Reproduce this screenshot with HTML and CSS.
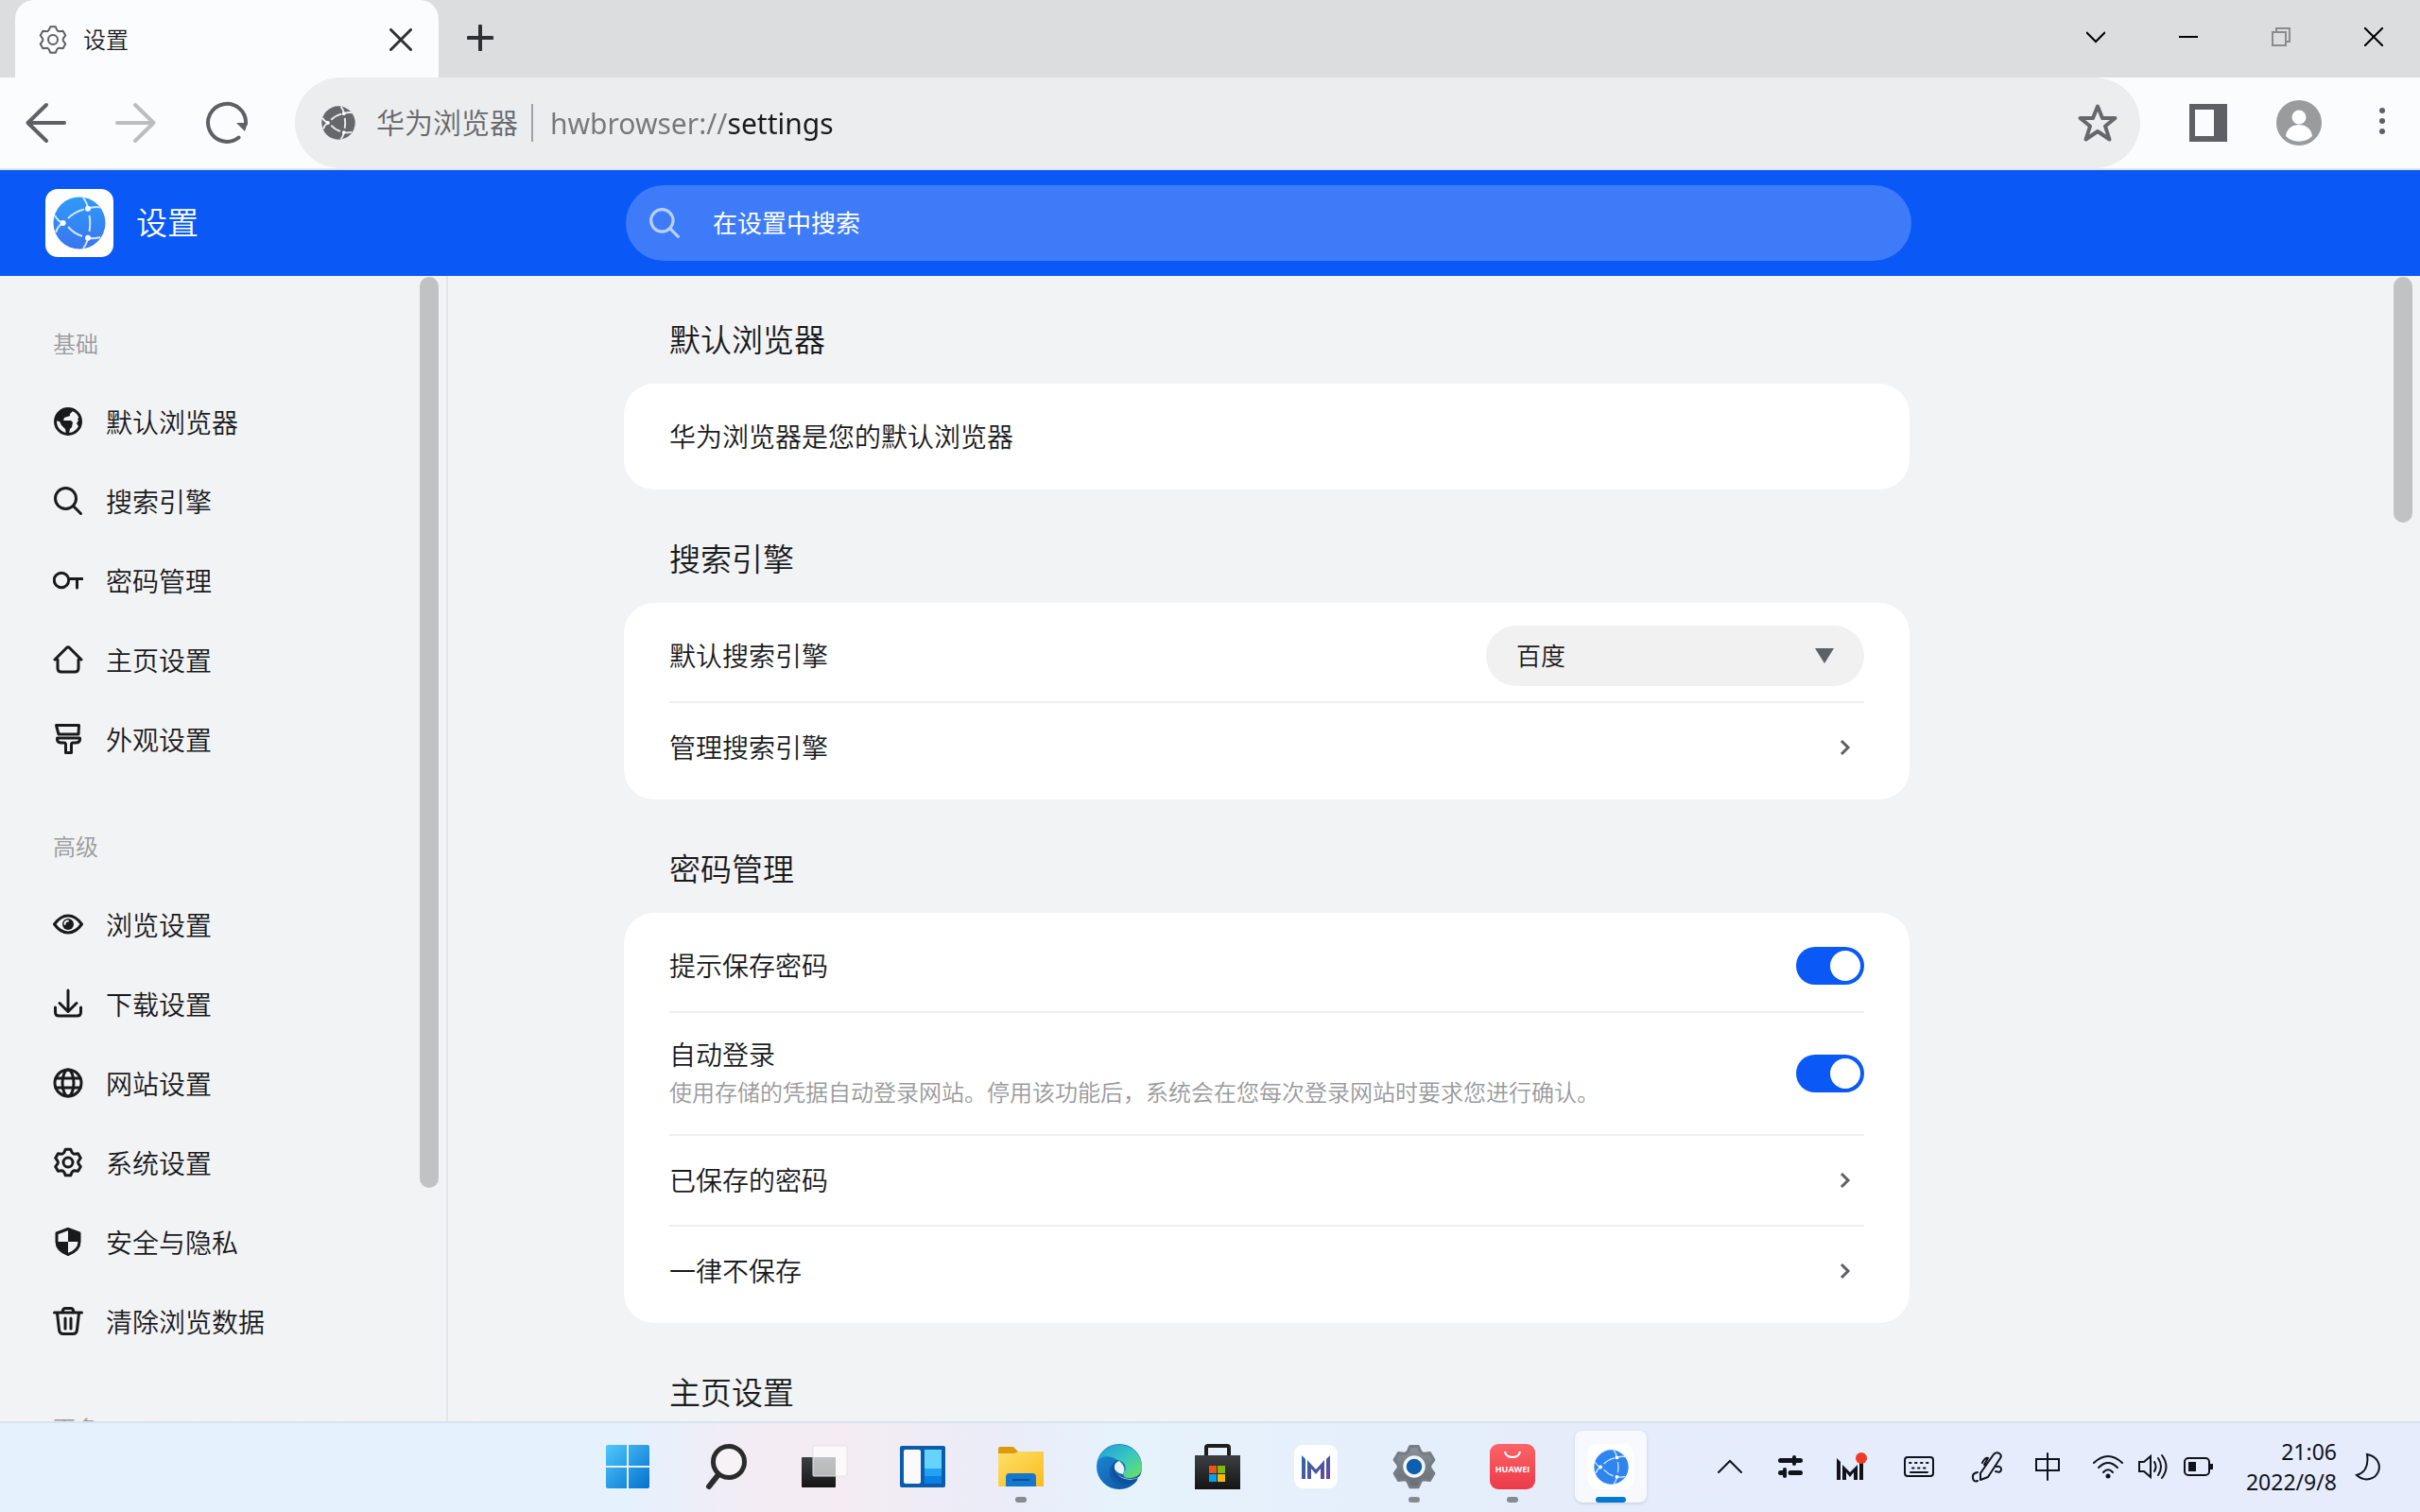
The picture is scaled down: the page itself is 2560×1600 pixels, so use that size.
FILE: index.html
```html
<!DOCTYPE html>
<html lang="zh-CN">
<head>
<meta charset="utf-8">
<title>设置</title>
<link rel="stylesheet" href="styles.css">
</head>
<body>
<svg class="sprite" aria-hidden="true">
  <defs>
    <linearGradient id="globe-blue" x1="0" y1="0" x2="0" y2="1"><stop offset="0" stop-color="#2f9bf8"/><stop offset="1" stop-color="#3b74f0"/></linearGradient>
    <linearGradient id="win-blue" gradientUnits="userSpaceOnUse" x1="0" y1="0" x2="46" y2="46"><stop offset="0" stop-color="#4fc8fb"/><stop offset="1" stop-color="#0470cf"/></linearGradient>
    <linearGradient id="dark-fill" x1="0" y1="0" x2="0" y2="1"><stop offset="0" stop-color="#3d3f42"/><stop offset="1" stop-color="#151515"/></linearGradient>
    <linearGradient id="folder-fill" x1="0" y1="0" x2="1" y2="1"><stop offset="0" stop-color="#ffdf6b"/><stop offset="1" stop-color="#f9bd1c"/></linearGradient>
    <linearGradient id="edge-top" x1="0" y1="0" x2="1" y2="1"><stop offset="0" stop-color="#2399dc"/><stop offset=".5" stop-color="#36c7c0"/><stop offset="1" stop-color="#6fe35a"/></linearGradient>
    <linearGradient id="edge-low" x1="0" y1="0" x2="1" y2="1"><stop offset="0" stop-color="#1d8fe0"/><stop offset="1" stop-color="#0b4a94"/></linearGradient>
    <linearGradient id="m-fill" x1="0" y1="0" x2="1" y2="1"><stop offset="0" stop-color="#276aa6"/><stop offset="1" stop-color="#6a45a0"/></linearGradient>
    <linearGradient id="red-fill" x1="0" y1="0" x2="0" y2="1"><stop offset="0" stop-color="#fb6466"/><stop offset="1" stop-color="#ec3a48"/></linearGradient>
    <linearGradient id="gear-fill" x1="0" y1="0" x2="0" y2="1"><stop offset="0" stop-color="#8a9299"/><stop offset="1" stop-color="#666d75"/></linearGradient>
  </defs>
  <symbol id="gear" viewBox="0 0 32 32">
    <path d="M11.7 5.8 13.3 2.2H18.7L20.3 5.8Q21.2 7.2 22.7 7.2L26.6 6.8 29.3 11.4 27 14.6Q26.2 16 27 17.4L29.3 20.6 26.6 25.2 22.7 24.8Q21.2 24.8 20.3 26.2L18.7 29.8H13.3L11.7 26.2Q10.8 24.8 9.3 24.8L5.4 25.2 2.7 20.6 5 17.4Q5.8 16 5 14.6L2.7 11.4 5.4 6.8 9.3 7.2Q10.8 7.2 11.7 5.8Z"/>
    <circle cx="16" cy="16" r="5"/>
  </symbol>
  <symbol id="search" viewBox="0 0 32 32"><circle cx="13.5" cy="13.5" r="11"/><path d="M21.5 21.5 29.5 29.5"/></symbol>
  <symbol id="chevron" viewBox="0 0 16 20"><path d="M4 3 11 10 4 17"/></symbol>
  <symbol id="globe" viewBox="0 0 56 56">
    <circle class="globe-disc" cx="28" cy="28" r="27.5"/>
    <g class="globe-lines">
      <path d="M2 20Q5 26 10.700 28Q5 31 3 38M16 23Q23 16 33 13.500M16 32Q22 39 31 42M38.500 20Q40 28 38.500 37M32 1Q36 6 37 12.700Q44 10 51 11.500M32 55Q36 50 37 43.700Q44 45 50 43"/>
      <circle cx="10.700" cy="28" r="3"/><circle cx="37" cy="12.700" r="3"/><circle cx="37" cy="43.700" r="3"/>
    </g>
  </symbol>
</svg>

<header class="tabstrip">
  <div class="tab">
    <svg class="tab-icon"><use href="#gear"/></svg>
    <span class="tab-title">设置</span>
    <button class="icon-button tab-close" aria-label="关闭标签页"><svg width="24" height="24" viewBox="0 0 24 24"><path d="M1.500 1.500 22.500 22.500M22.500 1.500 1.500 22.500"/></svg></button>
  </div>
  <button class="icon-button new-tab" aria-label="新标签页"><svg width="28" height="28" viewBox="0 0 28 28"><path d="M14 1.500V26.500M1.500 14H26.500"/></svg></button>
  <div class="window-controls">
    <button class="icon-button" aria-label="搜索标签页"><svg width="20" height="20" viewBox="0 0 20 20"><path d="M0 5 10 15 20 5"/></svg></button>
    <button class="icon-button" aria-label="最小化"><svg width="20" height="20" viewBox="0 0 20 20"><path d="M0 10H20"/></svg></button>
    <button class="icon-button restore" aria-label="还原"><svg width="20" height="20" viewBox="0 0 20 20"><path d="M1 5H15V19H1ZM5 5V1H19V15H15"/></svg></button>
    <button class="icon-button" aria-label="关闭"><svg width="20" height="20" viewBox="0 0 20 20"><path d="M0 0 20 20M20 0 0 20"/></svg></button>
  </div>
</header>

<div class="toolbar">
  <nav class="nav-buttons" aria-label="导航">
    <button class="icon-button" aria-label="后退"><svg width="44" height="44" viewBox="0 0 44 44"><path d="M23 3 3.500 22 23 41M3.500 22H42"/></svg></button>
    <button class="icon-button forward" aria-label="前进"><svg width="44" height="44" viewBox="0 0 44 44"><path d="M21 3 40.500 22 21 41M40.500 22H2"/></svg></button>
    <button class="icon-button" aria-label="刷新"><svg width="46" height="46" viewBox="0 0 46 46"><path d="M35.500 38.500A20 20 0 1 1 43 24"/><path class="solid" d="M33 23H45L42 32Z"/></svg></button>
  </nav>
  <div class="omnibox">
    <svg class="site-globe"><use href="#globe"/></svg>
    <label class="site-name" for="address">华为浏览器</label>
    <input class="address" id="address" type="text" value="hwbrowser://settings">
    <button class="icon-button star" aria-label="收藏"><svg width="42" height="42" viewBox="0 0 42 42"><path d="M21 3.500 26 16H39.500L29 24.500 33.500 38.500 21 30 8.500 38.500 13 24.500 2.500 16H16Z"/></svg></button>
  </div>
  <div class="toolbar-actions">
    <button class="icon-button" aria-label="侧边栏"><svg width="40" height="40" viewBox="0 0 40 40"><path class="solid" fill-rule="evenodd" d="M0 0H40V40H0ZM6 6V34H26V6Z"/></svg></button>
    <button class="icon-button" aria-label="个人资料"><svg width="48" height="48" viewBox="0 0 48 48"><g stroke="none"><circle cx="24" cy="24" r="24" fill="#9a9b9d"/><circle cx="24" cy="18" r="7.500" fill="#fff"/><path d="M10 38C11 30 17 26 24 26S37 30 38 38C31 45.500 17 45.500 10 38Z" fill="#fff"/></g></svg></button>
    <button class="icon-button menu" aria-label="更多选项"><svg width="8" height="32" viewBox="0 0 8 32"><g class="solid"><circle cx="4" cy="3" r="3"/><circle cx="4" cy="14" r="3"/><circle cx="4" cy="25" r="3"/></g></svg></button>
  </div>
</div>

<div class="page-header">
  <div class="brand">
    <span class="brand-logo"><svg><use href="#globe"/></svg></span>
    <h1>设置</h1>
  </div>
  <div class="settings-search">
    <svg class="search-icon"><use href="#search"/></svg>
    <input type="search" placeholder="在设置中搜索" aria-label="在设置中搜索">
  </div>
</div>

<div class="workspace">
  <aside class="sidebar">
    <h3>基础</h3>
    <ul>
      <li><a href="#default"><svg viewBox="0 0 32 32"><circle cx="16" cy="16" r="13.500"/><path class="solid" d="M3 11Q7 1 18 2.500L21 5 18 8 18 10 12 12 11 15 19 15 21 17 20 22 18 24 17 29H14L13 24 9 20 7 16 2 15ZM30 11V20L27 21 25 18 27 15 26 13Z"/></svg>默认浏览器</a></li>
      <li><a href="#engine"><svg><use href="#search"/></svg>搜索引擎</a></li>
      <li><a href="#password"><svg viewBox="0 0 32 32"><circle cx="9" cy="16" r="7.700"/><path d="M17 14.500H31M25.500 14.500V24"/></svg>密码管理</a></li>
      <li><a href="#home"><svg viewBox="0 0 32 32"><path d="M2 16 14.500 3.500Q16 2.300 17.500 3.500L30 16M5 16V25Q5 29 9 29H23Q27 29 27 25V16"/></svg>主页设置</a></li>
      <li><a href="#look"><svg viewBox="0 0 32 32"><path d="M3.500 1.500H27.500L27 11H6ZM4.500 15H28.500V17Q28 20 24 20H21Q19.500 20 19.500 22V30.500H13.500V22Q13.500 20 12 20H9Q5 20 4.500 17Z"/></svg>外观设置</a></li>
    </ul>
    <h3>高级</h3>
    <ul>
      <li><a href="#browse"><svg viewBox="0 0 32 32"><path d="M1.500 16Q8 7 16 7T30.500 16Q24 25 16 25T1.500 16Z"/><circle class="solid" cx="16" cy="16" r="6"/><path class="glint" d="M12.500 16Q12.500 12.500 16 12.500"/></svg>浏览设置</a></li>
      <li><a href="#download"><svg viewBox="0 0 32 32"><path d="M16 2V24M7 15.500 16 24.500 25 15.500M2.500 20V25Q2.500 29 6.500 29H25.500Q29.500 29 29.500 25V20"/></svg>下载设置</a></li>
      <li><a href="#sites"><svg viewBox="0 0 32 32"><circle cx="16" cy="16" r="14"/><ellipse cx="16" cy="16" rx="6" ry="14"/><path d="M3 11H29M3 21H29"/></svg>网站设置</a></li>
      <li><a href="#system"><svg><use href="#gear"/></svg>系统设置</a></li>
      <li><a href="#privacy"><svg viewBox="0 0 32 32"><path d="M16 2.500 28 7V16Q28 25 16 29.500Q4 25 4 16V7Z"/><path class="solid" d="M16 2.500 28 7V16H16ZM16 16V29.500Q4 25 4 16Z"/></svg>安全与隐私</a></li>
      <li><a href="#clear"><svg viewBox="0 0 32 32"><path d="M1.500 7H30.500M10 6.500Q10.500 2.500 13 2.500H19Q21.500 2.500 22 6.500M4.500 7.500 6.500 25Q7 29.500 11 29.500H21Q25 29.500 25.500 25L27.500 7.500M13 13V24M19 13V24"/></svg>清除浏览数据</a></li>
    </ul>
    <h3>更多</h3>
    <span class="scroll-thumb sidebar-thumb"></span>
  </aside>

  <main class="content">
    <section>
      <h2 id="default">默认浏览器</h2>
      <div class="card">
        <div class="row">华为浏览器是您的默认浏览器</div>
      </div>
    </section>
    <section>
      <h2 id="engine">搜索引擎</h2>
      <div class="card">
        <div class="row">
          <label for="engine-select">默认搜索引擎</label>
          <span class="select-box">
            <select id="engine-select"><option>百度</option></select>
            <svg width="20" height="16" viewBox="0 0 20 16"><path d="M0 0H20L10 16Z"/></svg>
          </span>
        </div>
        <a class="row" href="#engines">管理搜索引擎<svg class="row-chevron"><use href="#chevron"/></svg></a>
      </div>
    </section>
    <section>
      <h2 id="password">密码管理</h2>
      <div class="card">
        <div class="row">
          <label for="save-password">提示保存密码</label>
          <input class="toggle" id="save-password" type="checkbox" checked>
        </div>
        <div class="row row-tall">
          <label for="auto-login">自动登录<small>使用存储的凭据自动登录网站。停用该功能后，系统会在您每次登录网站时要求您进行确认。</small></label>
          <input class="toggle" id="auto-login" type="checkbox" checked>
        </div>
        <a class="row" href="#saved">已保存的密码<svg class="row-chevron"><use href="#chevron"/></svg></a>
        <a class="row" href="#never">一律不保存<svg class="row-chevron"><use href="#chevron"/></svg></a>
      </div>
    </section>
    <section>
      <h2 id="home">主页设置</h2>
    </section>
    <span class="scroll-thumb content-thumb"></span>
  </main>
</div>

<footer class="taskbar">
  <div class="apps">
    <button aria-label="开始"><svg width="46" height="46" viewBox="0 0 46 46"><path fill="url(#win-blue)" d="M2 0H22V22H0V2Q0 0 2 0ZM24 0H44Q46 0 46 2V22H24ZM0 24H22V46H2Q0 46 0 44ZM24 24H46V44Q46 46 44 46H24Z"/></svg></button>
    <button aria-label="搜索"><svg width="46" height="52" viewBox="0 0 46 52" fill="none" stroke="#2b2b2e"><circle cx="26" cy="21" r="16.500" stroke-width="5" fill="#f7f2f6"/><path d="M14.500 35 5 47" stroke-width="6" stroke-linecap="round"/></svg></button>
    <button aria-label="任务视图"><svg width="50" height="48" viewBox="0 0 50 48"><rect x="1" y="14" width="36" height="32" rx="1" fill="url(#dark-fill)"/><rect x="13" y="2" width="36" height="32" rx="1" fill="#fff" fill-opacity=".68" stroke="#e4e0e6"/></svg></button>
    <button aria-label="小组件"><svg width="48" height="44" viewBox="0 0 48 44"><rect width="48" height="44" rx="2" fill="#0a5cad"/><rect x="4" y="4" width="18" height="36" rx="2" fill="#fafafa"/><path fill="#66d3fc" d="M26 4H44V24H26Z"/><path fill="#23a2f5" d="M26 24H44V32H26Z"/><path fill="#0a80e4" d="M26 32H44V40H26Z"/></svg></button>
    <button class="running" aria-label="文件资源管理器"><svg width="48" height="42" viewBox="0 0 48 42"><path d="M0 2Q0 0 2 0H16L21 5H46Q48 5 48 8V20H0Z" fill="#dd9a0c"/><path d="M0 7H17L21 5H46Q48 5 48 7V42H0Z" fill="url(#folder-fill)"/><path d="M8 42V32Q8 28 12 28H36Q40 28 40 32V42Z" fill="#1378ce"/><path d="M15 35H33" stroke="#0c4f94" stroke-width="2"/></svg></button>
    <button aria-label="Edge"><svg width="48" height="48" viewBox="0 0 48 48"><circle cx="24" cy="24" r="24" fill="url(#edge-low)"/><path d="M1 18A24 24 0 0 1 48 24C48 34 40 36 34 36C29 36 27 33 29 30C33 24 29 18 22 17C12 11 5 13 1 18Z" fill="url(#edge-top)"/><path d="M22 17C12 22 10 36 22 43C30 47 39 44 43 38C35 42 19 38 19 26C19 22 20 18 24 18Z" fill="#0d5cac"/><path d="M24 18C18 21 18 28 22 32C27 37 36 38 43 36L48 32V48H46L43 38C35 42 25 37 22 32C17 25 20 19 24 18Z" fill="#e7f2fc"/><path d="M24 18C18 21 18 28 22 32C27 38 36 39 44 36C40 45 27 44 20 36C14 28 18 19 24 18Z" fill="#104f99"/><path d="M24 18Q18 20 19 26Q21 31 28 32Q32 24 24 18Z" fill="#e7f2fc"/></svg></button>
    <button aria-label="应用商店"><svg width="48" height="48" viewBox="0 0 48 48"><path d="M12 16V4Q12 2 14 2H34Q36 2 36 4V16" fill="none" stroke="#1e1e1e" stroke-width="4"/><path d="M0 12H48V48H0Z" fill="url(#dark-fill)"/><path fill="#f1511b" d="M15 23H23V31H15Z"/><path fill="#80bb0a" d="M24 23H32V31H24Z"/><path fill="#00a3ee" d="M15 32H23V40H15Z"/><path fill="#fbb80c" d="M24 32H32V40H24Z"/></svg></button>
    <button aria-label="电脑管家"><svg width="46" height="46" viewBox="0 0 46 46"><rect width="46" height="46" rx="9" fill="#fff"/><path d="M8 11 12 15V36H8ZM14 16 23 26 32 16V36H28V25L23 31 18 25V36H14ZM34 15 38 11V36H34Z" fill="url(#m-fill)"/></svg></button>
    <button class="running" aria-label="设置"><svg width="50" height="50" viewBox="0 0 32 32" fill="url(#gear-fill)" stroke="#757c84" stroke-width="2" stroke-linejoin="round"><use href="#gear"/><circle cx="16" cy="16" r="7.500" fill="#f4f7fb" stroke="none"/><circle cx="16" cy="16" r="5.300" fill="#0f5eb0" stroke="none"/></svg></button>
    <button class="running" aria-label="应用市场"><svg width="48" height="48" viewBox="0 0 48 48"><rect width="48" height="48" rx="9" fill="url(#red-fill)"/><path d="M16 8Q17 14 24 14T32 8" fill="none" stroke="#fff" stroke-width="2"/><text x="24" y="30" text-anchor="middle" class="market-label">HUAWEI</text></svg></button>
    <button class="active" aria-label="华为浏览器"><span class="app-tile"><svg width="37" height="37"><use href="#globe"/></svg></span></button>
  </div>
  <div class="tray">
    <button aria-label="显示隐藏的图标"><svg width="28" height="28" viewBox="0 0 28 28"><path d="M2 20 14 8 26 20"/></svg></button>
    <button aria-label="控制中心"><svg width="28" height="28" viewBox="0 0 28 28"><path d="M3.500 7.500H24.500M14 20.500H24.500M3.500 20.500H7" stroke-width="5"/><path d="M18 4V11M8 17V24" stroke-width="4"/></svg></button>
    <button class="pc-manager" aria-label="电脑管家"><svg width="34" height="34" viewBox="0 0 34 34"><path class="solid" d="M2 8 6 12V31H2ZM8 15 16 23 24 15V31H20V23L16 28 12 23V31H8ZM26 13H30V31H26Z"/><circle cx="28" cy="8" r="6" fill="#ee3b24" stroke="none"/></svg></button>
    <button class="keyboard" aria-label="触摸键盘"><svg width="34" height="24" viewBox="0 0 34 24"><rect x="2" y="2" width="30" height="20" rx="3"/><path d="M7 8H8.500M13 8H14.500M19 8H20.500M25 8H26.500M10 13.500H11.500M16 13.500H17.500M22 13.500H23.500M8 18H26"/></svg></button>
    <button aria-label="手写笔"><svg width="34" height="34" viewBox="0 0 34 34"><path d="M10 31V24L24 4Q27 1 30 3T31 8L18 28ZM12 13Q15 7 18 8L14 15M7 23Q1 24 2 29T7 32M27 17Q32 16 32 20T26 22" stroke-linejoin="round"/></svg></button>
    <button class="ime" aria-label="输入法"><svg width="28" height="32" viewBox="0 0 28 32"><path d="M2 8H26V20H2ZM14 2V30"/></svg></button>
    <button class="quick" aria-label="网络、音量和电池">
      <svg width="34" height="28" viewBox="0 0 34 28"><path d="M2 10Q17-4 32 10M7 15Q17 5 27 15M12 20Q17 14.500 22 20"/><circle class="solid" cx="17" cy="24" r="2.500"/></svg>
      <svg width="34" height="28" viewBox="0 0 34 28"><path d="M2 9V19H7L14 25V3L7 9ZM18 9Q21 14 18 19M22 5Q28 14 22 23M26 2Q35 14 26 26"/></svg>
      <svg width="34" height="24" viewBox="0 0 34 24"><rect x="2" y="3" width="26" height="18" rx="4"/><path class="solid" d="M6 7H14V17H6ZM28 9H32V15H28Z"/></svg>
    </button>
    <time class="clock" datetime="2022-09-08T21:06">21:06<br>2022/9/8</time>
    <button class="focus" aria-label="专注助手"><svg width="28" height="30" viewBox="0 0 28 30"><path d="M13 2C23 4 28 12 25 20S11 32 2 24C10 22 15 15 13 2Z"/></svg></button>
  </div>
</footer>
</body>
</html>
```

FILE: styles.css
```css
* {
  box-sizing: border-box;
}

body {
  margin: 0;
  height: 100vh;
  display: flex;
  flex-direction: column;
  overflow: hidden;
  background: #f2f3f5;
  color: #191a1c;
  font-family: "Noto Sans", "Noto Sans CJK SC", sans-serif;
  font-size: 28px;
  font-weight: 350;
}

h1, h2, h3, ul {
  margin: 0;
  padding: 0;
  font-weight: 350;
  list-style: none;
}

a {
  color: inherit;
  text-decoration: none;
}

button, input, select {
  font: inherit;
  color: inherit;
  border: 0;
  padding: 0;
  margin: 0;
  background: none;
  outline: none;
}

svg {
  display: block;
  flex: none;
}

.sprite {
  position: absolute;
  width: 0;
  height: 0;
}

.solid {
  fill: currentColor;
  stroke: none;
}

.icon-button {
  display: flex;
  align-items: center;
  justify-content: center;
}

.icon-button svg {
  fill: none;
  stroke: currentColor;
  stroke-width: 2;
}

.icon-button .solid {
  fill: currentColor;
  stroke: none;
}

/* Tab strip */
.tabstrip {
  flex: none;
  height: 82px;
  display: flex;
  align-items: flex-start;
  padding-left: 16px;
  background: #dcddde;
}

.tab {
  width: 448px;
  height: 82px;
  display: flex;
  align-items: center;
  padding: 2px 28px 0 24px;
  border-radius: 20px 20px 0 0;
  background: #fbfcfe;
}

.tab-icon {
  width: 32px;
  height: 32px;
  fill: none;
  stroke: #5f6064;
  stroke-width: 2;
  stroke-linejoin: round;
}

.tab-title {
  flex: 1;
  margin-left: 16px;
  font-size: 24px;
  line-height: 32px;
}

.tab-close svg,
.new-tab svg {
  stroke: #2f3033;
  stroke-width: 3;
  stroke-linecap: round;
}

.new-tab {
  width: 88px;
  height: 80px;
}

.new-tab svg {
  stroke-width: 4;
}

.window-controls {
  display: flex;
  height: 78px;
  margin-left: auto;
  color: #000;
}

.window-controls .icon-button {
  width: 98px;
}

.window-controls .restore {
  color: #8a8b8c;
}

/* Address toolbar */
.toolbar {
  flex: none;
  height: 98px;
  display: flex;
  border-bottom: 2px solid #dfe5f0;
  background: #fbfcfe;
  color: #5f6064;
}

.nav-buttons {
  display: flex;
  width: 312px;
}

.nav-buttons .icon-button {
  width: 96px;
}

.nav-buttons svg {
  stroke-width: 4;
  stroke-linecap: round;
  stroke-linejoin: round;
}

.forward {
  color: #bcbdbf;
}

.omnibox {
  flex: 1;
  display: flex;
  align-items: center;
  padding: 0 24px 0 28px;
  border-radius: 48px;
  background: #ecedef;
  font-size: 30px;
  color: #66676a;
}

.site-globe {
  width: 36px;
  height: 36px;
  fill: #66676a;
  stroke: #ecedef;
  stroke-width: 3;
}

.site-name {
  margin-left: 22px;
  padding-right: 14px;
  border-right: 2px solid #a0a1a4;
  line-height: 40px;
}

.address {
  flex: 1;
  margin-left: 18px;
  height: 48px;
  font-size: 30px;
  font-weight: 400;
  background: linear-gradient(to right, #77787a 188px, #191a1c 188px);
  -webkit-background-clip: text;
  background-clip: text;
  -webkit-text-fill-color: transparent;
}

.star svg {
  stroke-width: 4;
  stroke-linejoin: round;
}

.toolbar-actions {
  display: flex;
  gap: 52px;
  padding: 0 36px 0 52px;
}

.menu {
  margin-left: 8px;
}

/* Blue settings header */
.page-header {
  flex: none;
  height: 112px;
  display: flex;
  align-items: center;
  background: #0a59f7;
  color: #fff;
}

.brand {
  width: 662px;
  display: flex;
  align-items: center;
  gap: 24px;
  padding-left: 48px;
}

.brand-logo {
  width: 72px;
  height: 72px;
  display: grid;
  place-items: center;
  border-radius: 13px;
  background: #fff;
}

.brand-logo svg {
  width: 56px;
  height: 56px;
  fill: url(#globe-blue);
  stroke: #cfe6ff;
  stroke-width: 2;
}

.globe-lines path {
  fill: none;
}

.globe-lines circle {
  fill: #fff;
  stroke: none;
}

.globe-disc {
  stroke: none;
}

.brand h1 {
  font-size: 33px;
  line-height: 48px;
}

.settings-search {
  flex: 0 1 1360px;
  height: 80px;
  display: flex;
  align-items: center;
  padding: 0 24px;
  border-radius: 40px;
  background: #3d7bf9;
}

.search-icon {
  width: 34px;
  height: 34px;
  fill: none;
  stroke: #b8d0ff;
  stroke-width: 3;
  stroke-linecap: round;
}

.settings-search input {
  flex: 1;
  height: 48px;
  margin-left: 34px;
  font-size: 26px;
  font-weight: 400;
}

.settings-search input::placeholder {
  color: #fff;
  opacity: 1;
}

/* Sidebar and content */
.workspace {
  flex: 1;
  min-height: 0;
  display: flex;
}

.sidebar {
  position: relative;
  flex: none;
  width: 474px;
  padding-left: 56px;
  border-right: 2px solid #e4e5e8;
  overflow: hidden;
}

.sidebar h3 {
  margin-top: 32px;
  font-size: 24px;
  line-height: 80px;
  color: #999a9c;
}

.sidebar a {
  display: flex;
  align-items: center;
  gap: 24px;
  height: 84px;
}

.sidebar svg {
  width: 32px;
  height: 32px;
  fill: none;
  stroke: currentColor;
  stroke-width: 3;
  stroke-linecap: round;
  stroke-linejoin: round;
}

.sidebar .solid {
  fill: currentColor;
  stroke: none;
}

.sidebar .glint {
  stroke: #f2f3f5;
  stroke-width: 2;
}

.scroll-thumb {
  position: absolute;
  top: 1px;
  width: 20px;
  border-radius: 10px;
  background: #c1c2c4;
}

.sidebar-thumb {
  right: 8px;
  height: 964px;
}

.content {
  position: relative;
  flex: 1;
  padding: 44px 48px 0 186px;
  overflow: hidden;
}

.content section {
  max-width: 1360px;
  margin-bottom: 50px;
}

.content h2 {
  padding: 0 48px 22px;
  font-size: 33px;
  line-height: 48px;
}

.content-thumb {
  right: 8px;
  height: 260px;
}

.card {
  padding: 8px 48px;
  border-radius: 32px;
  background: #fff;
}

.row {
  height: 94px;
  display: flex;
  align-items: center;
  justify-content: space-between;
  line-height: 40px;
}

.row:not(:last-child) {
  height: 96px;
  border-bottom: 2px solid #eeeff1;
}

.row:first-child:not(:last-child) {
  height: 98px;
}

.row:only-child {
  height: 96px;
}

.row.row-tall {
  height: 130px;
}

.row small {
  display: block;
  font-size: 24px;
  color: #999a9c;
}

.row-chevron {
  width: 16px;
  height: 20px;
  margin-right: 12px;
  fill: none;
  stroke: #5f6064;
  stroke-width: 3;
}

.select-box {
  display: grid;
  align-items: center;
  justify-items: end;
  width: 400px;
}

.select-box > * {
  grid-area: 1 / 1;
}

.select-box select {
  width: 100%;
  height: 64px;
  padding: 0 32px;
  border-radius: 32px;
  background: #f1f1f2;
  font-size: 26px;
  appearance: none;
}

.select-box svg {
  margin-right: 32px;
  fill: #5f6064;
  pointer-events: none;
}

.toggle {
  appearance: none;
  width: 72px;
  height: 40px;
  padding: 4px;
  display: flex;
  border-radius: 20px;
  background: #c5c6c8;
}

.toggle::before {
  content: "";
  width: 32px;
  height: 32px;
  border-radius: 50%;
  background: #fff;
}

.toggle:checked {
  justify-content: flex-end;
  background: #0a59f7;
}

/* Taskbar */
.taskbar {
  flex: none;
  height: 96px;
  display: flex;
  justify-content: flex-end;
  padding-bottom: 2px;
  border-top: 2px solid #d9e2ee;
  background: linear-gradient(to right, #e5f2fd 0%, #e5f1fd 26%, #f3ecf4 31%, #f4ecf2 35%, #ebecf8 41%, #e6f2fc 46%, #e5effb 58%, #e5ecfb 66%, #e6ecfb 100%);
  color: #10131c;
}

.apps,
.tray {
  display: flex;
}

.apps button {
  position: relative;
  width: 104px;
  display: grid;
  place-items: center;
}

.running::after,
.active::after {
  content: "";
  position: absolute;
  bottom: 8px;
  left: 46px;
  width: 12px;
  height: 6px;
  border-radius: 3px;
  background: #858a93;
}

.active::after {
  left: 36px;
  width: 32px;
  background: #0078d4;
}

.active::before {
  content: "";
  position: absolute;
  inset: 8px 14px;
  border-radius: 8px;
  background: #f7f9fe;
  box-shadow: 0 1px 3px #c3cad8;
}

.app-tile {
  position: relative;
  width: 48px;
  height: 48px;
  display: grid;
  place-items: center;
  border-radius: 10px;
  background: #fff;
}

.app-tile svg {
  fill: #2f84f0;
  stroke: #cfe6ff;
  stroke-width: 2;
}

.market-label {
  font: 700 9px "Open Sans", sans-serif;
  fill: #fff;
}

.tray {
  margin-left: 42px;
  padding-right: 22px;
}

.tray button {
  width: 64px;
  display: flex;
  align-items: center;
  justify-content: center;
}

.tray svg {
  fill: none;
  stroke: currentColor;
  stroke-width: 2;
  stroke-linecap: round;
}

.tray .solid {
  fill: currentColor;
  stroke: none;
}

.tray .keyboard {
  width: 80px;
}

.tray .quick {
  width: 152px;
  gap: 14px;
  padding-left: 8px;
}

.tray .focus {
  width: 66px;
}

.clock {
  width: 122px;
  align-self: center;
  text-align: right;
  white-space: nowrap;
  font-size: 23px;
  font-weight: 400;
  line-height: 32px;
}
```
